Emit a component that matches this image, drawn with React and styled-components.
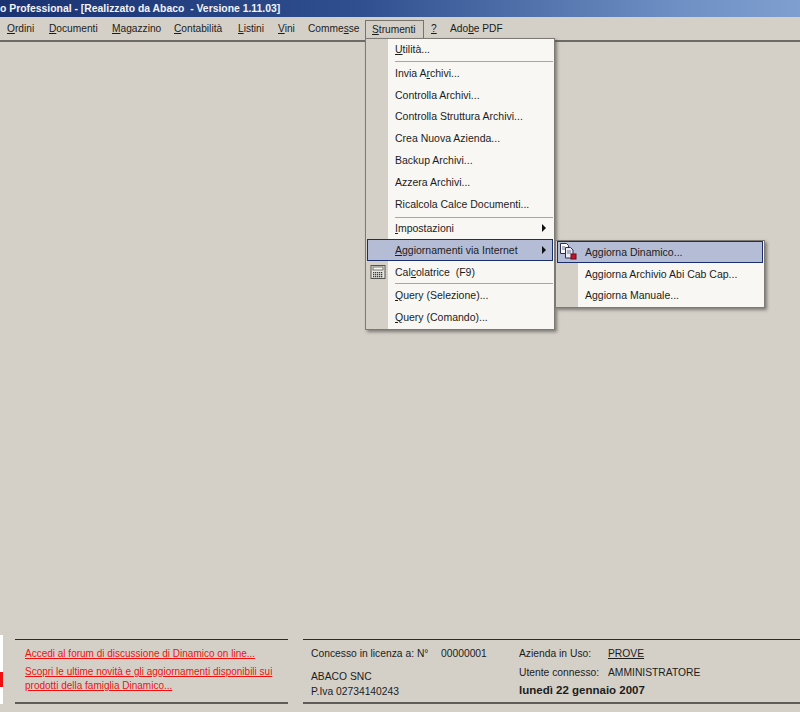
import styled, { createGlobalStyle } from "styled-components"

const GlobalStyle = createGlobalStyle`
  html, body { margin: 0; padding: 0; background: #d4d0c8; }
  body { font-family: "Liberation Sans", Arial, sans-serif; font-size: 10.2px; color: #1c1c1c; }
  u { text-underline-offset: 1px; }
`
const Page = styled.div`
  width: 800px;
  height: 712px;
  display: flex;
  flex-direction: column;
  overflow: hidden;
  background: #d4d0c8;
`
const TitleBar = styled.div`
  height: 17px;
  flex: none;
  line-height: 17px;
  font-weight: bold;
  font-size: 10.4px;
  color: #f4f4f8;
  white-space: pre;
  background: linear-gradient(to right, #1a3272, #2f4f8f 45%, #6f90c4 85%, #7f9fd0);
`
const MenuBar = styled.div`
  height: 25px;
  flex: none;
  display: flex;
  align-items: flex-start;
  padding-top: 3px;
  box-sizing: border-box;
  border-bottom: 2px solid #6e6b66;
`
const MenuItem = styled.div`
  position: relative;
  flex: none;
  width: ${p => p.$w}px;
  height: 18px;
  padding-left: ${p => p.$pad}px;
  box-sizing: border-box;
  line-height: 18px;
  white-space: nowrap;
  ${p => p.$open && `
    border: 1px solid #77746e;
    border-bottom: none;
    padding-left: 6px;
    line-height: 17px;
    background: #d4d0c8;
    height: 19px;
    z-index: 3;
  `}
`
const Dropdown = styled.div`
  position: absolute;
  top: ${p => p.$top}px;
  left: ${p => p.$left}px;
  width: ${p => p.$width}px;
  box-sizing: border-box;
  border: 1px solid #7d7a75;
  background: linear-gradient(to right, #d4d0c8 ${p => p.$rail}px, #f8f7f4 ${p => p.$rail}px);
  box-shadow: 2px 2px 3px rgba(70, 68, 64, 0.6);
  padding: 0 1px 1px;
  font-size: 10.5px;
  line-height: 14px;
  z-index: 2;
`
const Row = styled.div`
  position: relative;
  height: ${p => p.$h || 21.8}px;
  box-sizing: border-box;
  display: flex;
  align-items: center;
  white-space: pre;
  padding-left: 28px;
  ${p => p.$active && `
    background: #b5bdd6;
    outline: 1px solid #1a2d6c;
    outline-offset: -1px;
  `}
`
const Separator = styled.div`
  height: 1px;
  margin: ${p => p.$top}px 0 0 28px;
  background: #a8a6a1;
`
const Arrow = styled.span`
  position: absolute;
  right: 7px;
  top: 50%;
  margin-top: -4px;
  width: 0;
  height: 0;
  border-left: 4px solid #111;
  border-top: 4px solid transparent;
  border-bottom: 4px solid transparent;
`
const IconSlot = styled.span`
  position: absolute;
  left: ${p => p.$left}px;
  top: ${p => p.$top}px;
  display: flex;
`
const Workspace = styled.div`
  flex: 1;
`
const Footer = styled.div`
  flex: none;
  height: 77px;
  display: flex;
  align-items: flex-start;
  position: relative;
`
const LogoStrip = styled.div`
  width: 3px;
  height: 69px;
  flex: none;
  background: linear-gradient(to bottom, #fff 37px, #f01010 37px, #f01010 52px, #fff 52px);
`
const Panel = styled.div`
  margin: 4px 0 0 ${p => p.$gap}px;
  width: ${p => p.$width}px;
  height: 65px;
  box-sizing: border-box;
  flex: none;
  border-top: 1px solid #2c2b29;
  border-bottom: 2px solid #5e5c58;
`
const LinksPanel = styled(Panel)`
  padding: 7px 0 0 10px;
`
const FooterLink = styled.a`
  display: block;
  color: #f01010;
  font-size: 10px;
  text-decoration: underline;
  line-height: 14px;
  margin-bottom: 4px;
  white-space: nowrap;
`
const InfoPanel = styled(Panel)`
  display: grid;
  grid-template-columns: 130px 78px 89px 1fr;
  grid-template-rows: 19px 18px 19px;
  padding: 4px 0 0 8px;
  line-height: 17px;
  font-size: 10.3px;
  white-space: nowrap;
  align-items: center;
`
const CompanyBlock = styled.div`
  grid-column: 1 / span 2;
  grid-row: 2 / span 2;
  line-height: 15px;
  padding-top: 5px;
`
const DateText = styled.div`
  grid-column: 3 / span 2;
  grid-row: 3;
  font-weight: bold;
  font-size: 11.5px;
`
const Slot = styled.div`
  grid-column: ${p => p.$col};
  grid-row: ${p => p.$row};
`

const CalcIcon = () => (
  <svg width="16" height="14" viewBox="0 0 16 14">
    <rect x="1" y="0.5" width="14" height="13" fill="#e8e6e0" stroke="#55534f" />
    <rect x="3" y="2" width="10" height="3" fill="#f8f8f4" stroke="#55534f" strokeWidth="0.8" />
    {[7, 9, 11].map(y => [3, 5, 7, 9, 11].map(x => (
      <rect key={x + "-" + y} x={x} y={y} width="1.3" height="1.3" fill="#3b3a38" />
    )))}
  </svg>
)

const UpdateIcon = () => (
  <svg width="19" height="18" viewBox="0 0 19 18">
    <path d="M1.5 1.5h6l2 2v8h-8z" fill="#fbfbfb" stroke="#2b3050" />
    <path d="M6.5 5.5h5l2.5 2.5v8h-7.5z" fill="#e9ecf6" stroke="#2b3050" />
    <path d="M8 9h4M8 11h4M3 5h3M3 7h3" stroke="#6b7390" />
    <rect x="12" y="12" width="5" height="5" fill="#c4142c" stroke="#6a0a18" />
  </svg>
)

const menus = [
  ["O", "rdini", 42, 7],
  ["D", "ocumenti", 63, 7],
  ["M", "agazzino", 62, 7],
  ["C", "ontabilità", 64, 7],
  ["L", "istini", 40, 7],
  ["V", "ini", 30, 7],
]

function App() {
  return (
    <Page>
      <GlobalStyle />
      <TitleBar>o Professional - [Realizzato da Abaco  - Versione 1.11.03]</TitleBar>
      <MenuBar>
        {menus.map(([key, rest, w, pad]) => (
          <MenuItem key={key} $w={w} $pad={pad}><u>{key}</u>{rest}</MenuItem>
        ))}
        <MenuItem $w={64} $pad={7}>Comme<u>s</u>se</MenuItem>
        <MenuItem $w={59} $open>
          <u>S</u>trumenti
          <Dropdown $top={17} $left={-1} $width={190} $rail={22}>
            <Row $h={20}><span><u>U</u>tilità...</span></Row>
            <Separator $top={2} />
            <Row>Invia A<u>r</u>chivi...</Row>
            <Row>Controlla Archivi...</Row>
            <Row>Controlla Struttura Archivi...</Row>
            <Row>Crea Nuova Azienda...</Row>
            <Row>Backup Archivi...</Row>
            <Row>Azzera Archivi...</Row>
            <Row>Ricalcola Calce Documenti...</Row>
            <Separator $top={2} />
            <Row><span><u>I</u>mpostazioni</span><Arrow /></Row>
            <Row $active><span><u>A</u>ggiornamenti via Internet</span><Arrow /></Row>
            <Row>
              <IconSlot $left={3} $top={4}><CalcIcon /></IconSlot>
              <span>Cal<u>c</u>olatrice  (F9)</span>
            </Row>
            <Separator $top={0} />
            <Row><span><u>Q</u>uery (Selezione)...</span></Row>
            <Row><span><u>Q</u>uery (Comando)...</span></Row>
          </Dropdown>
          <Dropdown $top={219} $left={189} $width={210} $rail={22}>
            <Row $active>
              <IconSlot $left={2} $top={1}><UpdateIcon /></IconSlot>
              Aggiorna Dinamico...
            </Row>
            <Row>Aggiorna Archivio Abi Cab Cap...</Row>
            <Row>Aggiorna Manuale...</Row>
          </Dropdown>
        </MenuItem>
        <MenuItem $w={26} $pad={7}><u>?</u></MenuItem>
        <MenuItem $w={70} $pad={0}>Ado<u>b</u>e PDF</MenuItem>
      </MenuBar>
      <Workspace />
      <Footer>
        <LogoStrip />
        <LinksPanel $gap={12} $width={273}>
          <FooterLink>Accedi al forum di discussione di Dinamico on line...</FooterLink>
          <FooterLink>Scopri le ultime novità e gli aggiornamenti disponibili sui<br />prodotti della famiglia Dinamico...</FooterLink>
        </LinksPanel>
        <InfoPanel $gap={15} $width={497}>
          <Slot $col={1} $row={1}>Concesso in licenza a: N°</Slot>
          <Slot $col={2} $row={1}>00000001</Slot>
          <Slot $col={3} $row={1}>Azienda in Uso:</Slot>
          <Slot $col={4} $row={1}><u>PROVE</u></Slot>
          <CompanyBlock>ABACO SNC<br />P.Iva 02734140243</CompanyBlock>
          <Slot $col={3} $row={2}>Utente connesso:</Slot>
          <Slot $col={4} $row={2}>AMMINISTRATORE</Slot>
          <DateText>lunedì 22 gennaio 2007</DateText>
        </InfoPanel>
      </Footer>
    </Page>
  )
}

export default App
